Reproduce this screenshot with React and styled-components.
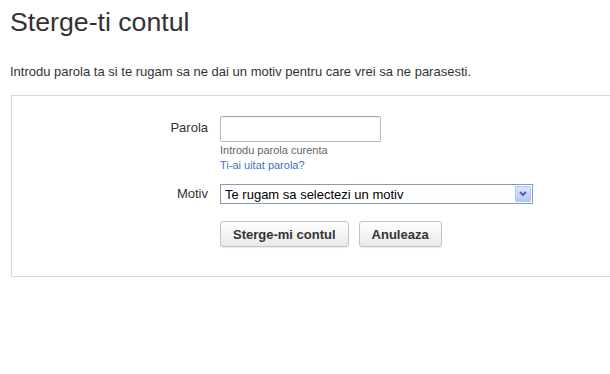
import React from "react";
import styled, { createGlobalStyle } from "styled-components";

const GlobalStyle = createGlobalStyle`
  body {
    margin: 0;
    background: #fff;
    font-family: "Liberation Sans", Arial, sans-serif;
    color: #333;
    overflow: hidden;
  }
`;

const Page = styled.div`
  padding: 6px 0 0 10px;
`;

const Title = styled.h1`
  margin: 0;
  font-size: 26.7px;
  line-height: 32px;
  font-weight: normal;
  color: #333;
`;

const Intro = styled.p`
  margin: 26px 0 0;
  font-size: 13px;
  line-height: 16px;
  color: #333;
`;

const Panel = styled.section`
  margin: 15px 0 0 1px;
  border: 1px solid #d9d9d9;
  border-right: 0;
  padding: 20px 0 29px;
`;

const Row = styled.div`
  display: flex;
  align-items: ${({ center }) => (center ? "center" : "flex-start")};
  margin-top: ${({ top }) => top || 0}px;
`;

const Label = styled.label`
  width: 196px;
  padding-right: 12px;
  padding-top: ${({ top }) => top || 0}px;
  text-align: right;
  font-size: 13px;
  line-height: 16px;
  color: #333;
`;

const Field = styled.div`
  display: flex;
  flex-direction: column;
`;

const TextInput = styled.input`
  box-sizing: border-box;
  width: 161px;
  height: 26px;
  margin: 0;
  border: 1px solid #b9b9b9;
  border-top-color: #a8a8a8;
  border-radius: 2px;
  box-shadow: inset 0 1px 1px rgba(0, 0, 0, 0.06);
  padding: 0 5px;
  font: 13px "Liberation Sans", Arial, sans-serif;
`;

const Hint = styled.span`
  margin-top: 1px;
  font-size: 11px;
  line-height: 15px;
  color: #666;
`;

const Link = styled.a`
  font-size: 11px;
  line-height: 15px;
  color: #3b74c0;
  text-decoration: none;
`;

const SelectBox = styled.div`
  position: relative;
  box-sizing: border-box;
  width: 313px;
  height: 20px;
  border: 1px solid #7f9db9;
  background: #fff;
`;

const Select = styled.select`
  appearance: none;
  width: 100%;
  height: 100%;
  margin: 0;
  border: 0;
  padding: 0 0 0 4px;
  background: transparent;
  font: 13px "Liberation Sans", Arial, sans-serif;
  color: #000;
  outline: none;
`;

const Arrow = styled.span`
  position: absolute;
  top: 1px;
  right: 1px;
  width: 16px;
  height: 16px;
  box-sizing: border-box;
  border: 1px solid #b3c5f0;
  border-radius: 1px;
  background: linear-gradient(#dae5fd, #b3c6f6);
  display: flex;
  align-items: center;
  justify-content: center;
  pointer-events: none;
`;

const Buttons = styled.div`
  display: flex;
  gap: 10px;
`;

const Button = styled.button`
  box-sizing: border-box;
  height: 26px;
  padding: 0 12px;
  margin: 0;
  border: 1px solid #c3c3c3;
  border-radius: 3px;
  background: linear-gradient(#ffffff, #e9e9e9);
  box-shadow: 0 1px 1px rgba(0, 0, 0, 0.08);
  font: bold 13px "Liberation Sans", Arial, sans-serif;
  color: #333;
  cursor: pointer;
`;

export default function App() {
  return (
    <Page>
      <GlobalStyle />
      <Title>Sterge-ti contul</Title>
      <Intro>
        Introdu parola ta si te rugam sa ne dai un motiv pentru care vrei sa ne parasesti.
      </Intro>
      <Panel>
        <Row>
          <Label top={4}>Parola</Label>
          <Field>
            <TextInput type="password" />
            <Hint>Introdu parola curenta</Hint>
            <Link href="#">Ti-ai uitat parola?</Link>
          </Field>
        </Row>
        <Row center top={11}>
          <Label>Motiv</Label>
          <SelectBox>
            <Select defaultValue="">
              <option value="">Te rugam sa selectezi un motiv</option>
            </Select>
            <Arrow>
              <svg width="8" height="6" viewBox="0 0 8 6">
                <path d="M1 1 L4 4 L7 1" fill="none" stroke="#4d6185" strokeWidth="1.8" />
              </svg>
            </Arrow>
          </SelectBox>
        </Row>
        <Row top={17}>
          <Label />
          <Buttons>
            <Button>Sterge-mi contul</Button>
            <Button>Anuleaza</Button>
          </Buttons>
        </Row>
      </Panel>
    </Page>
  );
}
